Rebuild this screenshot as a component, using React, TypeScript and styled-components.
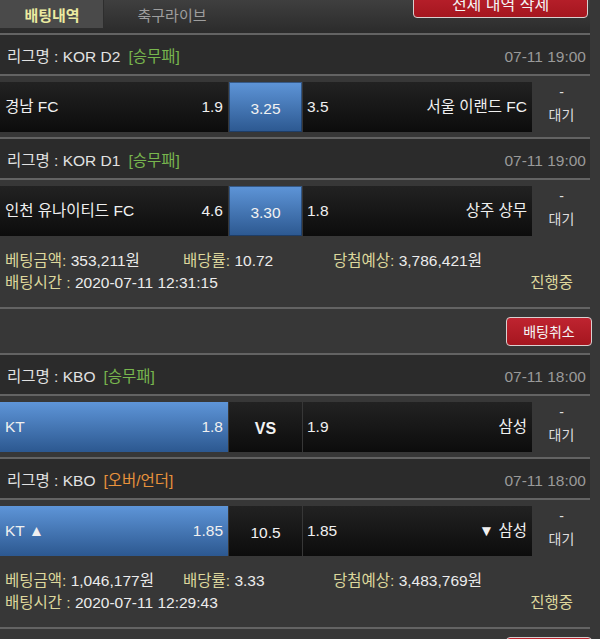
import React from 'react';
import styled, { createGlobalStyle } from 'styled-components';

const Global = createGlobalStyle`
  html, body { margin: 0; padding: 0; background: #373737; }
  body {
    font-family: "Liberation Sans", Arial, "Noto Sans CJK KR", sans-serif;
    color: #ececec;
    overflow: hidden;
  }
`;

const LINE = '#636363';
const FS = '15.5px';

const Page = styled.div`
  width: 590px;
`;

const Header = styled.div`
  display: flex;
  align-items: flex-start;
  height: 33px;
  background: linear-gradient(#3f3f3f, #2b2b2b);
  border-bottom: 2px solid ${LINE};
`;

const Tab = styled.div<{ $active?: boolean }>`
  width: ${(p) => (p.$active ? '104px' : '136px')};
  height: 29px;
  display: flex;
  align-items: center;
  justify-content: center;
  font-size: 15px;
  font-weight: ${(p) => (p.$active ? 700 : 400)};
  color: ${(p) => (p.$active ? '#ebeba0' : '#9e9e9e')};
  background: ${(p) => (p.$active ? '#4a4a4a' : 'transparent')};
  box-shadow: ${(p) => (p.$active ? 'inset -1px -1px 0 #2e2e2e' : 'none')};
  box-sizing: border-box;
`;

const RedButton = styled.div<{ $wide?: boolean }>`
  display: flex;
  align-items: center;
  justify-content: center;
  box-sizing: border-box;
  height: ${(p) => (p.$wide ? '31px' : '29px')};
  width: ${(p) => (p.$wide ? '175px' : '86px')};
  margin-left: auto;
  margin-right: ${(p) => (p.$wide ? '2px' : '-2px')};
  margin-top: ${(p) => (p.$wide ? '-13px' : '0')};
  background: linear-gradient(#bf2430, #a5161f);
  border: 1px solid #d9d0d0;
  border-radius: 4px;
  color: #f4f4f4;
  font-size: ${(p) => (p.$wide ? '16px' : '14px')};
`;

const Card = styled.div`
  border-bottom: 2px solid ${LINE};
`;

const Game = styled.div`
  & + & {
    border-top: 2px solid ${LINE};
  }
`;

const League = styled.div`
  box-sizing: border-box;
  height: 41px;
  display: flex;
  align-items: center;
  padding: 4px 4px 0 7px;
  background: #2b2b2b;
  border-bottom: 2px solid ${LINE};
  font-size: ${FS};
  line-height: 20px;
  color: #e2e2e2;
`;

const Bracket = styled.span<{ $color: string }>`
  color: ${(p) => p.$color};
  margin-left: 8px;
`;

const Time = styled.span`
  margin-left: auto;
  color: #9a9a9a;
`;

const MatchRow = styled.div`
  display: grid;
  grid-template-columns: 228px 73px 229px 1fr;
  grid-template-rows: 50px;
  column-gap: 1px;
  padding: 6px 0 5px;
`;

const blue = 'linear-gradient(#5e95d8, #2c5890)';
const dark = 'linear-gradient(#222222, #0c0c0c)';

const Side = styled.div<{ $sel?: boolean; $right?: boolean }>`
  display: flex;
  align-items: center;
  justify-content: space-between;
  padding: ${(p) => (p.$right ? '0 5px 0 4px' : '0 5px 0 5px')};
  background: ${(p) => (p.$sel ? blue : dark)};
  font-size: ${FS};
  line-height: 20px;
  color: #f0f0f0;
`;

const Mid = styled.div<{ $sel?: boolean; $bold?: boolean }>`
  display: flex;
  align-items: center;
  justify-content: center;
  padding-top: 3px;
  box-sizing: border-box;
  background: ${(p) => (p.$sel ? blue : dark)};
  box-shadow: ${(p) => (p.$sel ? 'inset 0 0 0 1px rgba(20,40,70,0.55)' : 'none')};
  font-size: ${(p) => (p.$bold ? '16px' : FS)};
  font-weight: ${(p) => (p.$bold ? 700 : 400)};
  line-height: 20px;
  color: #f2f2f2;
`;

const Status = styled.div`
  display: flex;
  flex-direction: column;
  align-items: center;
  justify-content: center;
  box-sizing: border-box;
  padding-bottom: 7px;
  font-size: 14px;
  line-height: 23px;
  color: #dedede;
`;

const Info = styled.div`
  padding: 9px 17px 13px 5px;
  font-size: ${FS};
  line-height: 22px;
`;

const InfoLine = styled.div`
  display: grid;
  grid-template-columns: 178px 150px 1fr;
`;

const InfoLine2 = styled.div`
  display: flex;
  justify-content: space-between;
`;

const Label = styled.span`
  color: #ddd79c;
`;

const Value = styled.span`
  color: #ececec;
`;

const CancelRow = styled.div`
  display: flex;
  align-items: center;
  height: 44px;
  border-bottom: 2px solid ${LINE};
`;

type GameData = {
  league: string;
  kind: string;
  kindColor: string;
  time: string;
  home: string;
  homeOdd: string;
  mid: string;
  awayOdd: string;
  away: string;
  sel: 'home' | 'mid';
  bold?: boolean;
};

type Bet = {
  games: GameData[];
  amount: string;
  rate: string;
  expect: string;
  betTime: string;
};

const GREEN = '#78b64e';
const ORANGE = '#e8923c';

const bets: Bet[] = [
  {
    games: [
      { league: 'KOR D2', kind: '[승무패]', kindColor: GREEN, time: '07-11 19:00', home: '경남 FC', homeOdd: '1.9', mid: '3.25', awayOdd: '3.5', away: '서울 이랜드 FC', sel: 'mid' },
      { league: 'KOR D1', kind: '[승무패]', kindColor: GREEN, time: '07-11 19:00', home: '인천 유나이티드 FC', homeOdd: '4.6', mid: '3.30', awayOdd: '1.8', away: '상주 상무', sel: 'mid' },
    ],
    amount: '353,211원',
    rate: '10.72',
    expect: '3,786,421원',
    betTime: '2020-07-11 12:31:15',
  },
  {
    games: [
      { league: 'KBO', kind: '[승무패]', kindColor: GREEN, time: '07-11 18:00', home: 'KT', homeOdd: '1.8', mid: 'VS', awayOdd: '1.9', away: '삼성', sel: 'home', bold: true },
      { league: 'KBO', kind: '[오버/언더]', kindColor: ORANGE, time: '07-11 18:00', home: 'KT ▲', homeOdd: '1.85', mid: '10.5', awayOdd: '1.85', away: '▼ 삼성', sel: 'home' },
    ],
    amount: '1,046,177원',
    rate: '3.33',
    expect: '3,483,769원',
    betTime: '2020-07-11 12:29:43',
  },
];

function GameBlock({ g }: { g: GameData }) {
  return (
    <Game>
      <League>
        리그명 : {g.league}
        <Bracket $color={g.kindColor}>{g.kind}</Bracket>
        <Time>{g.time}</Time>
      </League>
      <MatchRow>
        <Side $sel={g.sel === 'home'}>
          <span>{g.home}</span>
          <span>{g.homeOdd}</span>
        </Side>
        <Mid $sel={g.sel === 'mid'} $bold={g.bold}>{g.mid}</Mid>
        <Side $right>
          <span>{g.awayOdd}</span>
          <span>{g.away}</span>
        </Side>
        <Status>
          <span>-</span>
          <span>대기</span>
        </Status>
      </MatchRow>
    </Game>
  );
}

export default function App() {
  return (
    <Page>
      <Global />
      <Header>
        <Tab $active>배팅내역</Tab>
        <Tab>축구라이브</Tab>
        <RedButton $wide>전체 내역 삭제</RedButton>
      </Header>
      {bets.map((b, i) => (
        <React.Fragment key={i}>
          <Card>
            {b.games.map((g, j) => (
              <GameBlock key={j} g={g} />
            ))}
            <Info>
              <InfoLine>
                <span><Label>베팅금액:</Label> <Value>{b.amount}</Value></span>
                <span><Label>배당률:</Label> <Value>{b.rate}</Value></span>
                <span><Label>당첨예상:</Label> <Value>{b.expect}</Value></span>
              </InfoLine>
              <InfoLine2>
                <span><Label>배팅시간 :</Label> <Value>{b.betTime}</Value></span>
                <Label>진행중</Label>
              </InfoLine2>
            </Info>
          </Card>
          <CancelRow>
            <RedButton>배팅취소</RedButton>
          </CancelRow>
        </React.Fragment>
      ))}
    </Page>
  );
}
